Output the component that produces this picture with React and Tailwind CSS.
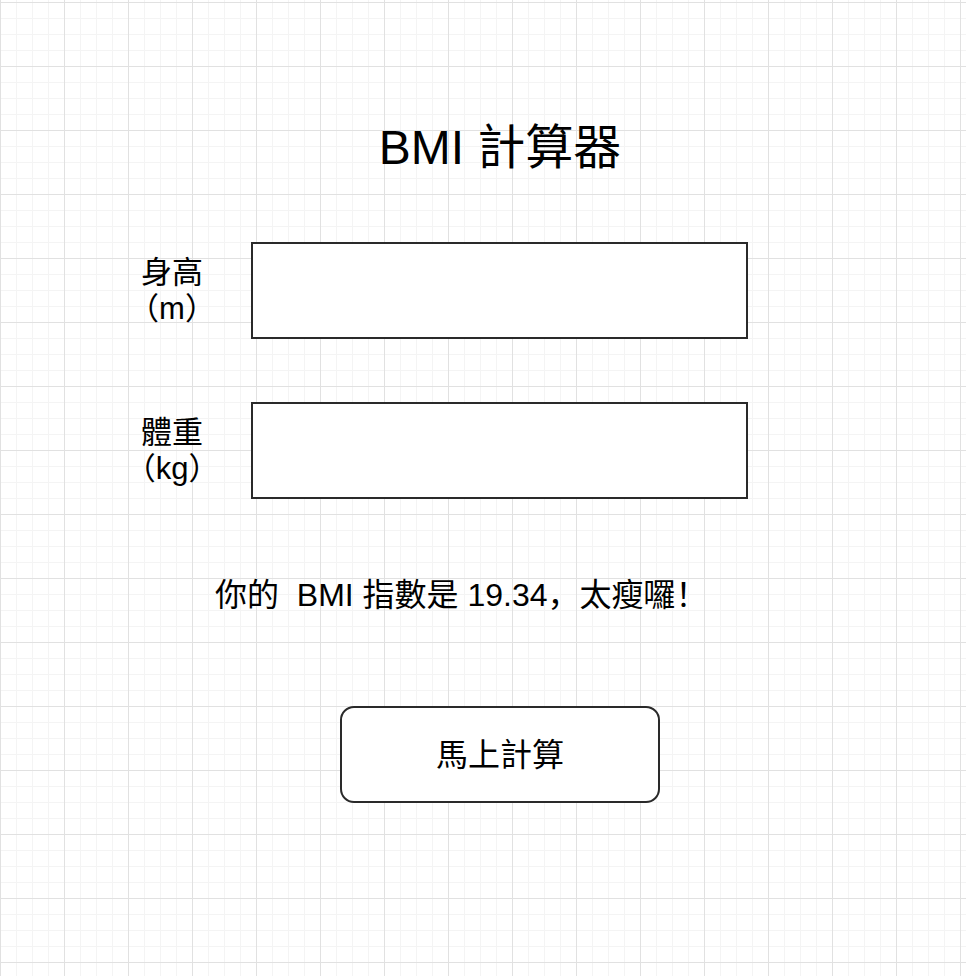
import React from 'react';

const font = { fontFamily: '"Liberation Sans", "Noto Sans CJK TC", sans-serif' };
const scPunct = { fontFamily: '"Noto Sans CJK SC", sans-serif' };

const Field = ({ label, unit }) => (
  <div className="flex items-center">
    <div className="w-[120px] text-center text-[31px] leading-[36px] text-black">
      <div>{label}</div>
      <div>（{unit}）</div>
    </div>
    <div className="ml-[19px] h-[97px] w-[497px] border-2 border-[#2a2a2a] bg-white" />
  </div>
);

export default function App() {
  return (
    <div
      style={font}
      className="min-h-[976px] w-full overflow-hidden bg-white text-black [background-image:linear-gradient(to_right,#e1e1e1_1px,transparent_1px),linear-gradient(to_bottom,#e1e1e1_1px,transparent_1px),linear-gradient(to_right,#f4f4f4_1px,transparent_1px),linear-gradient(to_bottom,#f4f4f4_1px,transparent_1px)] [background-size:64px_64px,64px_64px,16px_16px,16px_16px] [background-position:0_2px]"
    >
      <div className="pt-[118px]">
        {/* Title */}
        <div className="flex h-[60px] items-center justify-center pl-[34px]">
          <h1 className="text-[48px] leading-none">BMI 計算器</h1>
        </div>

        {/* Inputs */}
        <div className="mt-[64px] flex flex-col gap-[63px] pl-[112px]">
          <Field label="身高" unit="m" />
          <Field label="體重" unit="kg" />
        </div>

        {/* Result */}
        <div className="mt-[74px] flex h-[40px] items-center pl-[215px]">
          <p className="whitespace-pre text-[32px] leading-none">
            你的  BMI 指數是 19.34<span style={scPunct}>，</span>太瘦囉<span style={scPunct}>！</span>
          </p>
        </div>

        {/* Button */}
        <div className="mt-[93px] pl-[340px]">
          <button className="flex h-[97px] w-[320px] items-center justify-center rounded-[14px] border-2 border-[#2a2a2a] bg-white text-[32px] leading-none">
            馬上計算
          </button>
        </div>
      </div>
    </div>
  );
}
